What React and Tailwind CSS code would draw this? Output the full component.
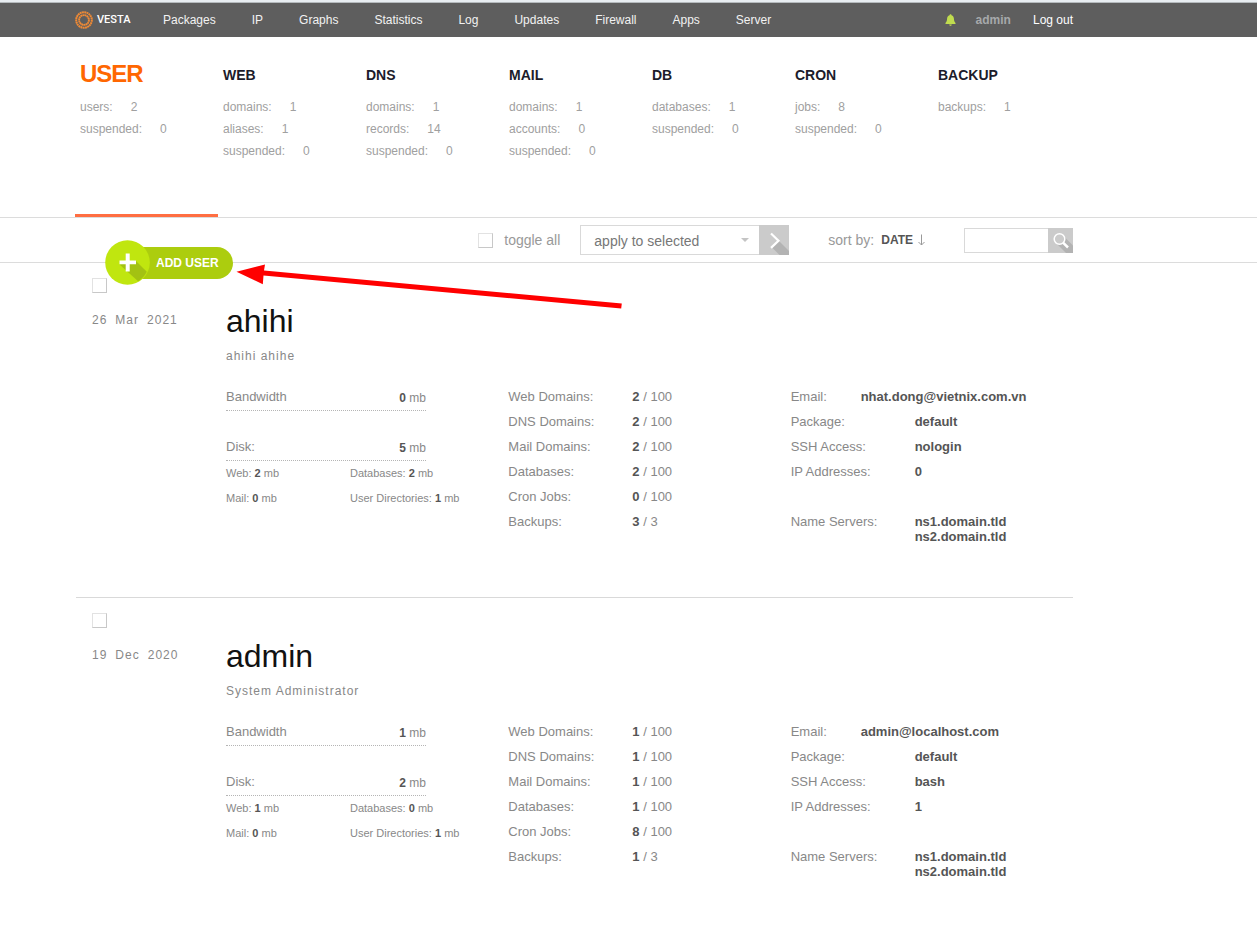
import React from "react";

const MENU = [
  "Packages",
  "IP",
  "Graphs",
  "Statistics",
  "Log",
  "Updates",
  "Firewall",
  "Apps",
  "Server",
];

const STATS = [
  { title: "USER", active: true, items: [["users", 2], ["suspended", 0]] },
  { title: "WEB", items: [["domains", 1], ["aliases", 1], ["suspended", 0]] },
  { title: "DNS", items: [["domains", 1], ["records", 14], ["suspended", 0]] },
  { title: "MAIL", items: [["domains", 1], ["accounts", 0], ["suspended", 0]] },
  { title: "DB", items: [["databases", 1], ["suspended", 0]] },
  { title: "CRON", items: [["jobs", 8], ["suspended", 0]] },
  { title: "BACKUP", items: [["backups", 1]] },
];

const USERS = [
  {
    login: "ahihi",
    fullName: "ahihi ahihe",
    date: ["26", "Mar", "2021"],
    bandwidth: 0,
    disk: 5,
    usage: [["Web", 2], ["Databases", 2], ["Mail", 0], ["User Directories", 1]],
    limits: [
      ["Web Domains", 2, 100],
      ["DNS Domains", 2, 100],
      ["Mail Domains", 2, 100],
      ["Databases", 2, 100],
      ["Cron Jobs", 0, 100],
      ["Backups", 3, 3],
    ],
    email: "nhat.dong@vietnix.com.vn",
    shell: "nologin",
    ips: 0,
  },
  {
    login: "admin",
    fullName: "System Administrator",
    date: ["19", "Dec", "2020"],
    bandwidth: 1,
    disk: 2,
    usage: [["Web", 1], ["Databases", 0], ["Mail", 0], ["User Directories", 1]],
    limits: [
      ["Web Domains", 1, 100],
      ["DNS Domains", 1, 100],
      ["Mail Domains", 1, 100],
      ["Databases", 1, 100],
      ["Cron Jobs", 8, 100],
      ["Backups", 1, 3],
    ],
    email: "admin@localhost.com",
    shell: "bash",
    ips: 1,
  },
];

function Logo() {
  return (
    <a href="#home" className="flex w-[88px] items-center gap-1 text-white">
      <svg width="18" height="18" viewBox="0 0 18 18" fill="none" stroke="#f08a35">
        <circle cx="9" cy="9" r="7.8" strokeWidth="2" strokeDasharray="1.9 0.4" />
        <circle cx="9" cy="9" r="4.9" strokeWidth="1.9" strokeDasharray="1.8 0.3" />
      </svg>
      <span className="font-[Roboto,'Liberation_Sans',sans-serif] text-[11px] font-medium">
        VESTA
      </span>
    </a>
  );
}

function TopBar() {
  return (
    <header className="border-t-2 border-[#e8edf1] bg-[#5e5e5e] text-xs text-[#f2f2f2]">
      <div className="border-t border-[#b5babd]">
        <div className="ml-[75px] flex h-[34px] max-w-[998px] items-center">
          <Logo />
          <nav className="flex gap-9">
            {MENU.map((m) => (
              <a key={m} href={"#" + m.toLowerCase()} className="hover:text-[#c5e04e]">
                {m}
              </a>
            ))}
          </nav>
          <div className="ml-auto flex items-center">
            <button type="button" aria-label="Notifications" className="mr-5">
              <svg width="11" height="12" viewBox="0 0 11 12" fill="#c0dc4f">
                <path d="M5.5 0.3c.6 0 1 .4 1 .9 1.6.5 2.3 1.7 2.4 3.400C9 6.900 9.500 8 10.500 9v.9H.5V9c1-1 1.500-2.100 1.600-4.400.1-1.700.8-2.900 2.400-3.400 0-.5.4-.9 1-.9zM4.200 10.400h2.600c-.1.8-.6 1.300-1.300 1.300s-1.200-.5-1.300-1.300z" />
              </svg>
            </button>
            <a href="#profile" className="mr-[22px] font-bold text-[#a6a9ab]">
              admin
            </a>
            <a href="#logout" className="text-white">
              Log out
            </a>
          </div>
        </div>
      </div>
    </header>
  );
}

function StatTabs() {
  return (
    <div className="border-b border-[#dcdcdc]">
      <div className="ml-[75px] flex h-[180px] max-w-[1001px]">
        {STATS.map((s) => (
          <a
            key={s.title}
            href={"#" + s.title.toLowerCase()}
            className={
              "flex-1 border-b-3 pl-[5px] pt-5 " +
              (s.active ? "border-[#ff6e42]" : "border-transparent")
            }
          >
            <h2
              className={
                "flex h-9 items-center font-bold " +
                (s.active ? "pb-0.5 text-2xl tracking-[-1px] text-[#ff6701]" : "text-sm text-[#1c1c2b]")
              }
            >
              {s.title}
            </h2>
            <ul className="mt-[3px] text-xs leading-[22px] text-[#a0a0a0]">
              {s.items.map(([label, value]) => (
                <li key={label} className="flex gap-[18px]">
                  <span>{label}:</span>
                  <span>{value}</span>
                </li>
              ))}
            </ul>
          </a>
        ))}
      </div>
    </div>
  );
}

function Check({ label, id }) {
  return (
    <input
      type="checkbox"
      id={id}
      aria-label={label}
      className="block size-[15px] appearance-none border border-[#e2e2e2] border-r-[#c8c8c8] border-b-[#c8c8c8] bg-white checked:bg-[#acce0f]"
    />
  );
}

function AddUser() {
  return (
    <button
      type="button"
      className="absolute top-[22px] left-[30px] flex h-[45px] items-center text-xs font-bold text-white"
    >
      <span className="ml-5 flex h-8 items-center rounded-r-full bg-[#accd0e] pr-[14px] pl-[31px]">
        ADD USER
      </span>
      <svg className="absolute top-0 left-0" width="45" height="45" viewBox="0 0 45 45">
        <circle cx="22.500" cy="22.500" r="22.300" fill="#c0e60f" />
        <path d="M30.500 20.500l11.300 11.300a22.300 22.300 0 0 1-8.700 9.400L14.500 24.500z" fill="#a3c212" />
        <path d="M20.700 13.500h4v7h6.300v3.700h-6.300v7.300h-4v-7.300h-6.200v-3.700h6.200z" fill="#fff" />
      </svg>
    </button>
  );
}

function Toolbar() {
  return (
    <div className="border-b border-[#dcdcdc]">
      <div className="relative ml-[75px] flex h-11 max-w-[998px] items-center justify-end text-sm text-[#999]">
        <AddUser />
        <Check id="toggle-all" />
        <label htmlFor="toggle-all" className="mr-5 ml-[11px]">
          toggle all
        </label>
        <div className="relative">
          <select
            aria-label="Bulk action"
            className="block h-[30px] w-[179px] appearance-none border border-r-0 border-[#d9d9d9] bg-white pt-px pl-[13px] text-[#777]"
          >
            <option>apply to selected</option>
            <option>rebuild</option>
            <option>suspend</option>
            <option>delete</option>
          </select>
          <svg className="pointer-events-none absolute top-[13px] right-[10px]" width="8" height="4" fill="#c4c4c4">
            <path d="M0 0h8L4 4z" />
          </svg>
        </div>
        <button type="button" aria-label="Apply" className="mr-[39px] bg-[#cbcbcb]">
          <svg className="block" width="30" height="30" fill="none">
            <path d="M19.500 15.500L30 26v4H20.500l-8-8z" fill="#b3b3b3" />
            <path d="M12 8.500l7.500 7.200-7.500 7.200" stroke="#fff" strokeWidth="2.200" />
          </svg>
        </button>
        <span className="mr-[7px]">sort by:</span>
        <button type="button" className="mr-[39px] flex items-center text-xs font-bold text-[#555]">
          DATE
          <svg className="ml-[5px]" width="7" height="12" fill="none" stroke="#999">
            <path d="M3.500 0.500v10.500M0.500 8l3 3 3-3" />
          </svg>
        </button>
        <input
          type="text"
          aria-label="Search"
          className="h-[25px] w-[84px] border border-r-0 border-[#d9d9d9] bg-white px-2 text-xs outline-none"
        />
        <button type="button" aria-label="Search" className="bg-[#cbcbcb]">
          <svg className="block" width="25" height="25" fill="none">
            <path d="M15.500 8L25 17.500V25h-7l-9-9z" fill="#b3b3b3" />
            <circle cx="11.500" cy="11" r="5.300" fill="#cbcbcb" stroke="#fff" strokeWidth="1.500" />
            <path d="M15.300 14.800l4.700 4.700" stroke="#fff" strokeWidth="2.500" />
          </svg>
        </button>
      </div>
    </div>
  );
}

function Meter({ label, value }) {
  return (
    <div className="flex h-[27px] w-[200px] justify-between border-b border-dotted border-[#b5b5b5]">
      <span>{label}</span>
      <span className="pt-0.5 text-xs leading-6">
        <b className="text-[#555]">{value}</b> mb
      </span>
    </div>
  );
}

function Detail({ label, children }) {
  return (
    <div className="flex">
      <dt className="w-[124px] shrink-0">{label}:</dt>
      <dd className="font-bold text-[#555]">{children}</dd>
    </div>
  );
}

function UserRow({ user, last }) {
  return (
    <li
      className={
        "flex h-[335px] border-b pt-[15px] " + (last ? "border-transparent" : "border-[#d9d9d9]")
      }
    >
      <div className="w-[150px] shrink-0 pl-4">
        <Check label={"Select " + user.login} />
        <p className="mt-[19px] flex gap-2 text-xs tracking-[1px] text-[#888]">
          {user.date.map((d) => (
            <span key={d}>{d}</span>
          ))}
        </p>
      </div>

      <div className="flex-1 pt-[23px] text-[13px] leading-[25px] text-[#888]">
        <h3 className="text-[32px] leading-10 text-[#111]">{user.login}</h3>
        <p className="mt-[3px] text-xs leading-6 tracking-[1px]">{user.fullName}</p>

        <div className="mt-4 grid grid-cols-3">
          <div>
            <Meter label="Bandwidth" value={user.bandwidth} />
            <div className="h-[23px]" />
            <Meter label="Disk:" value={user.disk} />
            <ul className="grid grid-cols-[124px_auto] text-[11px] leading-[25px]">
              {user.usage.map(([label, value]) => (
                <li key={label}>
                  {label}: <b className="text-[#555]">{value}</b> mb
                </li>
              ))}
            </ul>
          </div>

          <dl>
            {user.limits.map(([label, used, max]) => (
              <div key={label} className="flex">
                <dt className="w-[124px]">{label}:</dt>
                <dd>
                  <b className="text-[#555]">{used}</b> / {max}
                </dd>
              </div>
            ))}
          </dl>

          <dl>
            <div className="flex">
              <dt className="w-[70px] shrink-0">Email:</dt>
              <dd className="font-bold text-[#555]">{user.email}</dd>
            </div>
            <Detail label="Package">default</Detail>
            <Detail label="SSH Access">{user.shell}</Detail>
            <Detail label="IP Addresses">{user.ips}</Detail>
            <div className="mt-[30px] leading-[15px]">
              <Detail label="Name Servers">
                ns1.domain.tld
                <br />
                ns2.domain.tld
              </Detail>
            </div>
          </dl>
        </div>
      </div>
    </li>
  );
}

// red pointer aimed at the add button
function Pointer() {
  return (
    <svg
      className="pointer-events-none absolute top-[260px] left-[235px]"
      width="390"
      height="52"
      fill="#f00"
    >
      <path d="M1.500 11.800L30 4.500 29 10.500 386.800 43.500 386.200 48.500 28.500 15.500 27.800 24.300z" />
    </svg>
  );
}

export default function App() {
  return (
    <div className="relative min-h-screen bg-white font-['Liberation_Sans',Arial,sans-serif]">
      <TopBar />
      <StatTabs />
      <Toolbar />
      <ul className="ml-[76px] max-w-[997px]">
        {USERS.map((u, i) => (
          <UserRow key={u.login} user={u} last={i === USERS.length - 1} />
        ))}
      </ul>
      <Pointer />
    </div>
  );
}
